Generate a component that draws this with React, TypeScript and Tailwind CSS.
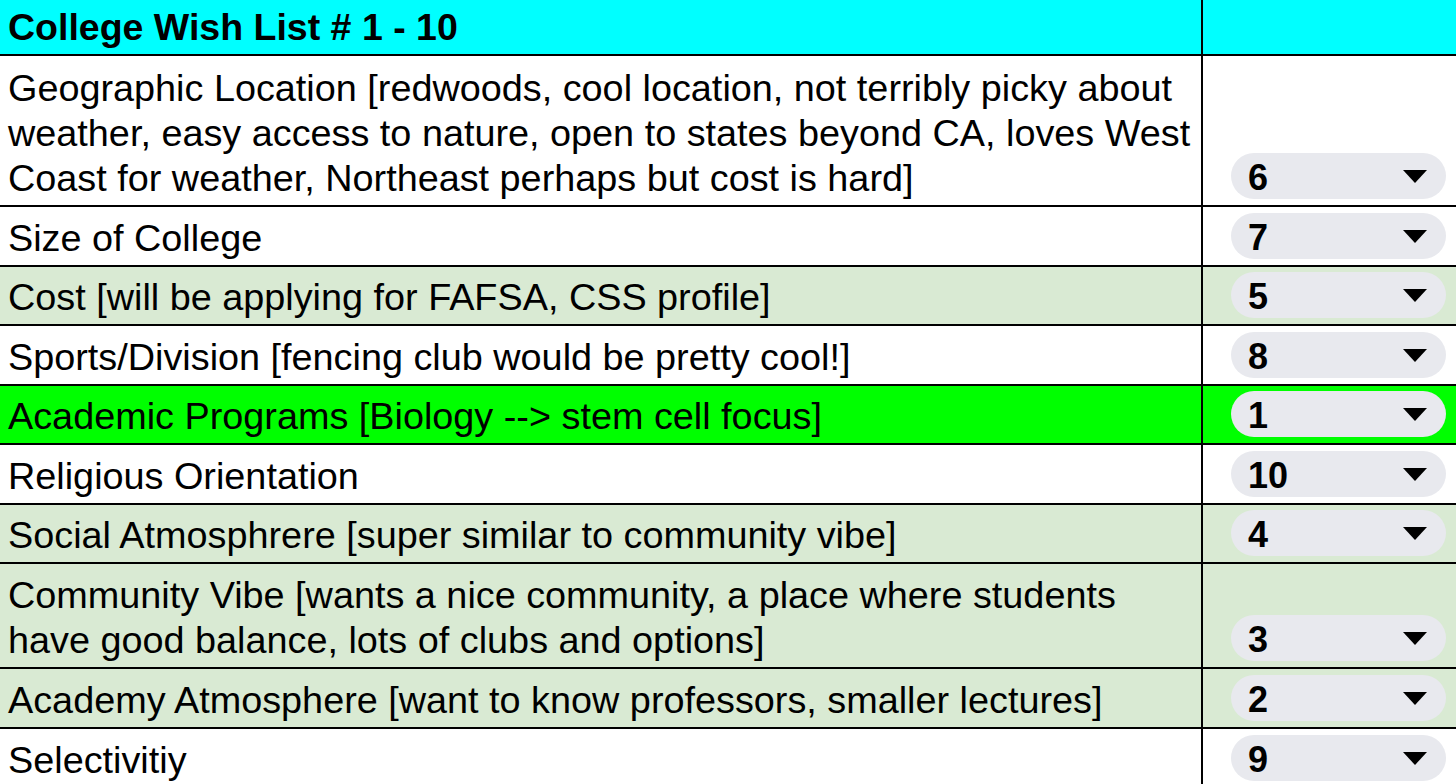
import React from "react";

type Row = { lines: string[]; value: string; bg: string; h: string };

const rows: Row[] = [
  {
    lines: [
      "Geographic Location [redwoods, cool location, not terribly picky about",
      "weather, easy access to nature, open to states beyond CA, loves West",
      "Coast for weather, Northeast perhaps but cost is hard]",
    ],
    value: "6",
    bg: "bg-white",
    h: "h-[151px]",
  },
  { lines: ["Size of College"], value: "7", bg: "bg-white", h: "h-[60px]" },
  { lines: ["Cost [will be applying for FAFSA, CSS profile]"], value: "5", bg: "bg-[#d9ead3]", h: "h-[59px]" },
  { lines: ["Sports/Division [fencing club would be pretty cool!]"], value: "8", bg: "bg-white", h: "h-[60px]" },
  { lines: ["Academic Programs [Biology --> stem cell focus]"], value: "1", bg: "bg-[#00ff00]", h: "h-[59px]" },
  { lines: ["Religious Orientation"], value: "10", bg: "bg-white", h: "h-[60px]" },
  { lines: ["Social Atmosphrere [super similar to community vibe]"], value: "4", bg: "bg-[#d9ead3]", h: "h-[59px]" },
  {
    lines: [
      "Community Vibe [wants a nice community, a place where students",
      "have good balance, lots of clubs and options]",
    ],
    value: "3",
    bg: "bg-[#d9ead3]",
    h: "h-[105px]",
  },
  { lines: ["Academy Atmosphere [want to know professors, smaller lectures]"], value: "2", bg: "bg-[#d9ead3]", h: "h-[60px]" },
  { lines: ["Selectivitiy"], value: "9", bg: "bg-white", h: "h-[60px]" },
];

function Pill({ value }: { value: string }) {
  return (
    <div className="ml-[28px] mb-[6px] flex h-[46px] w-[215px] items-center justify-between rounded-full bg-[#e8e9ee] pl-[17px] pr-[19px]">
      <span className="pt-[4px] text-[36px] font-bold leading-none text-black">{value}</span>
      <svg width="24" height="13" viewBox="0 0 24 13">
        <polygon points="0,0 24,0 12,13" fill="#000" />
      </svg>
    </div>
  );
}

export default function App() {
  return (
    <div
      className="w-[1456px] h-[784px] overflow-hidden bg-white text-black"
      style={{ fontFamily: '"Liberation Sans", Arial, Helvetica, sans-serif' }}
    >
      <div className="flex h-[56px] border-b-2 border-black bg-[#00ffff]">
        <div className="flex w-[1203px] items-end border-r-[2px] border-black pb-[4px] pl-[8px]">
          <span className="text-[37.5px] font-bold leading-[45px]">College Wish List # 1 - 10</span>
        </div>
        <div className="flex-1" />
      </div>
      {rows.map((r, i) => (
        <div key={i} className={`flex ${r.h} border-b-2 border-black ${r.bg}`}>
          <div className="flex w-[1203px] items-end border-r-[2px] border-black pb-[4px] pl-[8px]">
            <div className="text-[37.8px] leading-[45px] whitespace-nowrap">
              {r.lines.map((l, j) => (
                <div key={j}>{l}</div>
              ))}
            </div>
          </div>
          <div className="flex flex-1 items-end">
            <Pill value={r.value} />
          </div>
        </div>
      ))}
    </div>
  );
}
